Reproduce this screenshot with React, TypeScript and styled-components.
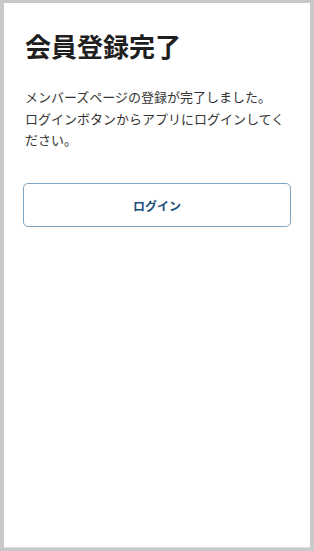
import styled, { createGlobalStyle } from "styled-components";

const GlobalStyle = createGlobalStyle`
  html, body, #root {
    height: 100%;
  }
  body {
    margin: 0;
    background: #c8c8c8;
    font-family: "Noto Sans CJK JP", "Noto Sans", sans-serif;
  }
`;

const Frame = styled.div`
  box-sizing: border-box;
  height: calc(100% - 7px);
  margin: 3px 4px 4px 4px;
  background: #ffffff;
  padding: 25px 19px 0 19px;
  box-shadow: 0 1px 0 #dedede;
`;

const Title = styled.h1`
  margin: 0 0 0 2px;
  font-size: 26px;
  line-height: 36px;
  font-weight: 700;
  color: #1f1f1f;
`;

const Message = styled.p`
  margin: 22px 0 0 2px;
  font-size: 13px;
  line-height: 21.7px;
  color: #333333;
`;

const LoginButton = styled.button`
  display: block;
  box-sizing: border-box;
  width: 100%;
  height: 44px;
  margin-top: 32px;
  border: 1px solid #7ea5c3;
  border-radius: 5px;
  background: #ffffff;
  color: #1e4f7b;
  font-family: inherit;
  font-size: 12px;
  font-weight: 700;
  cursor: pointer;
`;

function App() {
  return (
    <>
      <GlobalStyle />
      <Frame>
        <Title>会員登録完了</Title>
        <Message>
          メンバーズページの登録が完了しました。
          <br />
          ログインボタンからアプリにログインしてください。
        </Message>
        <LoginButton>ログイン</LoginButton>
      </Frame>
    </>
  );
}

export default App;
